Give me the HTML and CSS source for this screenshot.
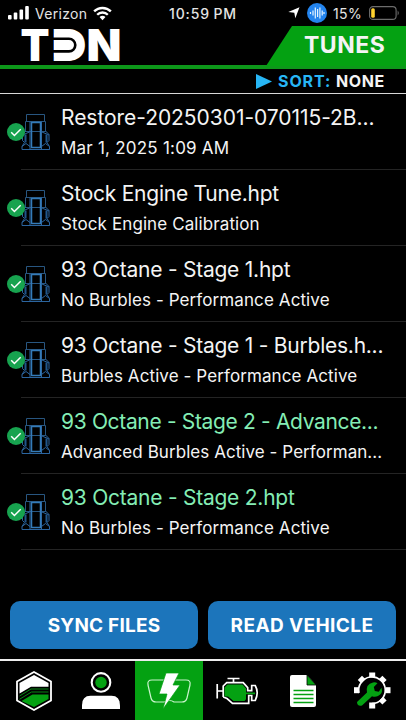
FILE: index.html
```
<!DOCTYPE html>
<html lang="en">
<head>
<meta charset="utf-8">
<title>Tunes</title>
<link rel="stylesheet" href="styles.css">
</head>
<body>
<svg class="defs" width="0" height="0">
  <symbol id="module" viewBox="0 0 30 38">
    <g fill="none" stroke="#2c659f" stroke-width="1">
      <path d="M5.500 1.500h18v7h-18zM4.500 8.500h20v10h-20z" stroke="#285680"/>
      <path d="M5 18 1.500 21.500v6l2 2-2.500 4v3h8v-28M24.500 18l3.500 3.500v6l-2 2 2.500 4v3h-8v-28M1 36.500h27.500M1 33.500l4-3 4 3M28.500 33.500l-4-3-4 3M1.500 22l7-3M28 22l-7-3"/>
      <path d="M4.500 21.500v8M25.500 21.500v8" stroke-width="2" stroke="#20568b"/>
      <path d="M10.500 9.500h9v25h-9z" stroke="#347bb8" stroke-width="1.500"/>
    </g>
  </symbol>
  <symbol id="check" viewBox="0 0 18 18">
    <circle cx="9" cy="9" r="9" fill="#17a34f"/>
    <path d="m4.200 9.300 3.200 3.200 6.300-6.300" fill="none" stroke="#fff" stroke-width="1.500"/>
  </symbol>
</svg>
<div class="app">
  <header class="header">
    <div class="status">
      <svg class="signal" viewBox="0 0 21 14" fill="#fff"><rect y="9" width="3.600" height="4.500" rx="1"/><rect x="5.700" y="6.500" width="3.600" height="7" rx="1"/><rect x="11.500" y="3.500" width="3.600" height="10" rx="1"/><rect x="17.200" y="0" width="3.600" height="13.500" rx="1"/></svg>
      <span class="carrier">Verizon</span>
      <svg class="wifi" viewBox="0 0 20 15" fill="none" stroke="#fff" stroke-width="2.500"><path d="M1.200 5.300a12.500 12.500 0 0 1 17.600 0M4.400 8.800a8 8 0 0 1 11.200 0"/><path d="M10 14.500 6.900 11.300a4.400 4.400 0 0 1 6.200 0z" fill="#fff" stroke="none"/></svg>
      <span class="clock">10:59 PM</span>
      <svg class="location" viewBox="0 0 12 12"><path d="M11.500.3 7.300 11.300 6.300 5.700.3 4.900z" fill="#fff"/></svg>
      <svg class="voice" viewBox="0 0 20 20"><circle cx="10" cy="10" r="10" fill="#2384ee"/><path d="M3.500 9v2M6 7.500v5M8.300 4.500v11M10.600 6v8M12.900 4.500v11M15.200 7.500v5M17 9v2" stroke="#e5f4ff" stroke-width="1.200"/></svg>
      <span class="percent">15%</span>
      <svg class="battery" viewBox="0 0 30 14"><rect x=".6" y=".6" width="26.500" height="12.800" rx="3.500" fill="none" stroke="#6d6d6d" stroke-width="1.100"/><path d="M28.700 4.500q2 2.500 0 5z" fill="#777"/><rect x="2.200" y="2.300" width="3.600" height="9.400" rx="1.500" fill="#ffd22f"/></svg>
    </div>
    <div class="brand">
      <svg class="logo" viewBox="0 0 100 34">
        <g class="logo-text"><text x="-.5" y="33" textLength="29" lengthAdjust="spacingAndGlyphs">T</text><text x="30.500" y="33" textLength="35" lengthAdjust="spacingAndGlyphs">D</text><text x="65.500" y="33" textLength="35" lengthAdjust="spacingAndGlyphs">N</text></g>
        <path d="M33 5h15a12 12 0 0 1 0 24H33z" fill="#fff"/>
        <path d="M31 10.800h17a6.300 6.300 0 0 1 0 12.600H31" fill="none" stroke="#000" stroke-width="2.600"/>
      </svg>
      <div class="tab"><h1>TUNES</h1></div>
    </div>
  </header>
  <div class="sort"><svg viewBox="0 0 16 15"><path d="M0 0 16 7.500 0 15z" fill="#27b6f5"/></svg><span class="sort-label">SORT:</span><span class="sort-value">NONE</span></div>
  <main class="list">
    <article class="row restore"><svg class="check"><use href="#check"/></svg><svg class="module"><use href="#module"/></svg><div class="copy"><h2>Restore-20250301-070115-2B...</h2><p>Mar 1, 2025 1:09 AM</p></div></article>
    <article class="row"><svg class="check"><use href="#check"/></svg><svg class="module"><use href="#module"/></svg><div class="copy"><h2>Stock Engine Tune.hpt</h2><p>Stock Engine Calibration</p></div></article>
    <article class="row"><svg class="check"><use href="#check"/></svg><svg class="module"><use href="#module"/></svg><div class="copy"><h2>93 Octane - Stage 1.hpt</h2><p>No Burbles - Performance Active</p></div></article>
    <article class="row"><svg class="check"><use href="#check"/></svg><svg class="module"><use href="#module"/></svg><div class="copy"><h2>93 Octane - Stage 1 - Burbles.h...</h2><p>Burbles Active - Performance Active</p></div></article>
    <article class="row active long"><svg class="check"><use href="#check"/></svg><svg class="module"><use href="#module"/></svg><div class="copy"><h2>93 Octane - Stage 2 - Advance...</h2><p>Advanced Burbles Active - Performan...</p></div></article>
    <article class="row active"><svg class="check"><use href="#check"/></svg><svg class="module"><use href="#module"/></svg><div class="copy"><h2>93 Octane - Stage 2.hpt</h2><p>No Burbles - Performance Active</p></div></article>
  </main>
  <div class="actions"><button>SYNC FILES</button><button class="read">READ VEHICLE</button></div>
  <nav class="nav">
    <a><svg viewBox="0 0 36 40"><path d="M18 1 35 10.500v19L18 39 1 29.500v-19z" fill="#000" stroke="#fff" stroke-width="1.800"/><path d="M18 4 32.500 12v3.800H15L3.500 22.500V12z" fill="#fff"/><path d="m3.500 25 11.500-7h17.500M3.500 28.300l12-7.300h17" fill="none" stroke="#078a13" stroke-width="1"/><path d="m5.500 30 11-6.500h16v4.500L18 36z" fill="#04a112"/></svg></a>
    <a><svg viewBox="0 0 40 40"><circle cx="20" cy="11" r="9.800" fill="#000" stroke="#fff" stroke-width="2.200"/><circle cx="20" cy="11" r="6" fill="#04a112"/><path d="M0 39v-4q0-10 9-10h22q9 0 9 10v4z" fill="#fff"/></svg></a>
    <a class="selected"><svg class="flash" viewBox="0 0 46 38"><path d="M6 8h34q5 0 4 5l-3 13q-1 4-5 4h-8q-4-3-10 0h-8q-4 0-5-4L2 13Q1 8 6 8z" fill="none" stroke="#c9f4cc" stroke-width="1.200"/><path d="M20 1h13l-6 12h7L17 37l4-15h-8z" fill="#fff" stroke="#04a112" stroke-width=".7"/></svg></a>
    <a><svg class="engine" viewBox="0 0 44 28"><path d="M12.500 1.500h12M18.500 1.500v4M2.200 7v14.500M2.200 14h6M8.200 20V9l3.500-3.300h16.500l4.500 5v3h4V8.500h3.500q4 7 0 15h-3.500v-5h-3v7.800H17.500L12 21.500l-3.800-1.500" fill="none" stroke="#fff" stroke-width="1.700"/><path d="M9.500 10.500 12.500 7.500h15l3.500 4v4h9v1.800h-9v5L29.500 24H18.500L13 19.500H9.500z" fill="#04a112"/></svg></a>
    <a><svg class="document" viewBox="0 0 28 32"><path d="M3 0h14l9 10v20q0 2-2 2H2q-2 0-2-2V2q0-2 2-2z" fill="#fff"/><path d="M17 0v10h9z" fill="#04a112" stroke="#000" stroke-width=".8"/><path d="M3.500 15.500h20M3.500 19.500h20M3.500 23.500h20M3.500 27.500h20" stroke="#04a112" stroke-width="1.500"/></svg></a>
    <a><svg class="settings" viewBox="0 0 38 38"><path d="M6 21A13.300 13.300 0 1 1 19 31.500" fill="none" stroke="#fff" stroke-width="1.700"/><g fill="#fff"><rect x="16.200" y=".5" width="6" height="5"/><rect x="32.500" y="15.200" width="5" height="6"/><rect x="16.200" y="30.500" width="6" height="6"/><rect x="1" y="15.200" width="5" height="6"/><rect x="16.200" y=".8" width="6" height="5" transform="rotate(45 19.200 18.200)"/><rect x="16.200" y=".8" width="6" height="5" transform="rotate(-45 19.200 18.200)"/><rect x="16.200" y=".8" width="6" height="5" transform="rotate(135 19.200 18.200)"/></g><path d="M4 30 14 20.500Q12.500 12 20 10.500q2.500-.5 4.500.7L20.800 15l1 4 4 .8 2.700-4q1.800 6-3.500 8.200-3 1.300-6 .2L9 33.500q-5 1-5-3.500z" fill="#04a112"/></svg></a>
  </nav>
</div>
</body>
</html>
```
FILE: styles.css
```
* { box-sizing: border-box; }
body { margin: 0; background: #000; color: #f4f4f4; font-family: Inter, "Liberation Sans", sans-serif; }
h1, h2, p { margin: 0; font-weight: 400; }
svg { display: block; flex: none; }
.defs { position: absolute; }
.app { width: 406px; height: 720px; display: flex; flex-direction: column; overflow: hidden; }
.header { height: 69px; border-bottom: 4px solid #0d971a; }
.status { height: 26px; display: flex; align-items: center; white-space: nowrap; font-size: 14px; color: #e4e4e4; }
.signal { width: 21px; height: 14px; margin-left: 8px; }
.carrier { width: 53px; margin-left: 6px; letter-spacing: .3px; }
.wifi { width: 19px; height: 15px; margin-left: 5px; }
.clock { width: 70px; margin-left: 57px; font-weight: 500; letter-spacing: .85px; word-spacing: -1px; }
.location { width: 12px; height: 12px; margin-left: 49px; }
.voice { width: 20px; height: 20px; margin-left: 7px; }
.percent { width: 30px; margin-left: 6px; letter-spacing: .4px; }
.battery { width: 30px; height: 14px; margin-left: 6px; }
.brand { height: 39px; display: flex; justify-content: space-between; }
.logo { width: 100px; height: 34px; margin: 2px 0 0 21px; overflow: visible; }
.logo-text { font: 900 44px Inter, sans-serif; fill: #fff; }
.tab { width: 140px; height: 40px; padding: 6px 0 0 38px; background: #04a112; clip-path: polygon(26px 0, 100% 0, 100% 100%, 0 100%); }
.tab h1 { font-size: 23px; font-weight: 700; line-height: 27px; letter-spacing: .5px; }
.sort { height: 25px; display: flex; align-items: center; padding-left: 256px; border-bottom: 1.500px solid #d7d7d7; font-size: 16px; font-weight: 700; }
.sort svg { width: 16px; height: 15px; }
.sort-label { width: 54px; margin-left: 6px; color: #27b6f5; letter-spacing: .9px; }
.sort-value { margin-left: 4px; letter-spacing: .6px; }
.list { height: 507px; }
.row { height: 76px; display: flex; position: relative; align-items: flex-start; }
.row::after { content: ""; position: absolute; bottom: 0; left: 21px; right: 0; height: 1px; background: #242424; }
.check { position: relative; z-index: 1; width: 18px; height: 18px; margin: 29px 0 0 7px; }
.module { width: 30px; height: 38px; margin: 19px 0 0 -4px; }
.copy { margin: 10px 0 0 10px; white-space: nowrap; }
.copy h2 { font-size: 21px; line-height: 28px; letter-spacing: -.24px; }
.copy p { margin-top: 4px; font-size: 17px; line-height: 24px; letter-spacing: .1px; }
.restore h2 { letter-spacing: -.05px; }
.restore p { letter-spacing: .22px; }
.long h2 { letter-spacing: -.34px; }
.long p { letter-spacing: .06px; }
.active h2 { color: #84edb5; }
.actions { height: 48px; display: flex; gap: 10px; padding: 0 10px; }
.actions button { flex: 1; padding: 0; border: 0; border-radius: 10px; background: #1c75bb; color: #fff; font: 700 19px Inter, sans-serif; letter-spacing: .2px; }
.actions .read { letter-spacing: .4px; }
.nav { height: 61px; margin-top: 10px; display: grid; grid-template-columns: repeat(6, 1fr); border-top: 2px solid #ededed; }
.nav a { display: flex; align-items: center; justify-content: center; }
.nav svg { width: 38px; height: 40px; }
.nav .selected { background: #04a112; }
.nav .flash { width: 46px; height: 38px; }
.nav .engine { width: 44px; height: 28px; }
.nav .document { width: 28px; height: 32px; }
.nav .settings { width: 38px; height: 38px; }
```
